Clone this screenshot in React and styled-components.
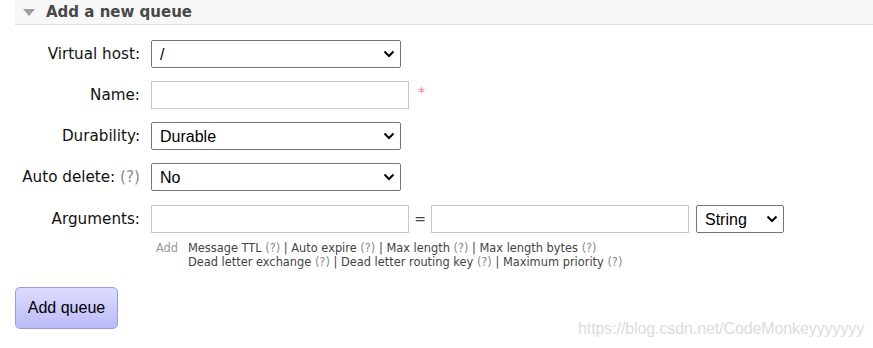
import React from 'react'
import styled, { createGlobalStyle } from 'styled-components'

const GlobalStyle = createGlobalStyle`
  html, body {
    margin: 0;
    padding: 0;
    background: #fff;
  }
  body {
    font-family: "DejaVu Sans", Verdana, sans-serif;
    color: #000;
  }
`

// 필드 설명 도움말 목록
const helpLines = [
  ['Message TTL', 'Auto expire', 'Max length', 'Max length bytes'],
  ['Dead letter exchange', 'Dead letter routing key', 'Maximum priority'],
]

function Chevron() {
  return (
    <ArrowIcon width="12" height="8" viewBox="0 0 12 8">
      <path d="M1.5 1.5 L6 6 L10.5 1.5" fill="none" stroke="#000" strokeWidth="2" />
    </ArrowIcon>
  )
}

function Select({ value, width, gap }) {
  return (
    <SelectWrap $width={width} $gap={gap}>
      <SelectBox $width={width} defaultValue={value}>
        <option>{value}</option>
      </SelectBox>
      <Chevron />
    </SelectWrap>
  )
}

export default function App() {
  return (
    <Page>
      <GlobalStyle />
      <SectionHead>
        <Triangle />
        <Title>Add a new queue</Title>
      </SectionHead>

      <Form>
        <Row>
          <Label>Virtual host:</Label>
          <Select value="/" width={250} />
        </Row>
        <Row>
          <Label>Name:</Label>
          <TextInput />
          <Required>*</Required>
        </Row>
        <Row>
          <Label>Durability:</Label>
          <Select value="Durable" width={250} />
        </Row>
        <Row>
          <Label>Auto delete: <Help>(?)</Help></Label>
          <Select value="No" width={250} />
        </Row>
        <Row $top={1}>
          <Label>Arguments:</Label>
          <TextInput />
          <Equals>=</Equals>
          <TextInput />
          <Select value="String" width={88} gap={7} />
        </Row>
        <HelpRow>
          <AddText>Add</AddText>
          <HelpList>
            {helpLines.map((line, i) => (
              <div key={i}>
                {line.map((name, j) => (
                  <span key={name}>
                    {j > 0 && ' | '}
                    {name} <Help>(?)</Help>
                  </span>
                ))}
              </div>
            ))}
          </HelpList>
        </HelpRow>
      </Form>

      <SubmitButton>Add queue</SubmitButton>
      <Watermark>https://blog.csdn.net/CodeMonkeyyyyyyy</Watermark>
    </Page>
  )
}

const Page = styled.div`
  position: relative;
  width: 873px;
  height: 348px;
  overflow: hidden;
`

const SectionHead = styled.div`
  margin-left: 15px;
  height: 24px;
  background: #f7f7f7;
  border-bottom: 1px solid #ddd;
  display: flex;
  align-items: center;
`

const Triangle = styled.span`
  width: 0;
  height: 0;
  margin-left: 8px;
  margin-right: 11px;
  border-left: 6px solid transparent;
  border-right: 6px solid transparent;
  border-top: 7px solid #a0a0a0;
`

const Title = styled.h2`
  margin: 0;
  font-size: 15px;
  font-weight: bold;
  color: #484848;
`

const Form = styled.div`
  display: flex;
  flex-direction: column;
  gap: 13px;
  padding-top: 15px;
`

const Row = styled.div`
  display: flex;
  align-items: center;
  height: 28px;
  margin-top: ${p => p.$top || 0}px;
`

const Label = styled.label`
  width: 140px;
  padding-right: 11px;
  box-sizing: content-box;
  text-align: right;
  font-size: 15.2px;
  color: #111;
  white-space: nowrap;
`

const Help = styled.span`
  color: #8a8a8a;
`

const SelectWrap = styled.div`
  position: relative;
  width: ${p => p.$width}px;
  height: 28px;
  margin-left: ${p => p.$gap || 0}px;
`

const SelectBox = styled.select`
  appearance: none;
  width: ${p => p.$width}px;
  height: 28px;
  box-sizing: border-box;
  border: 1px solid #767676;
  border-radius: 2px;
  background: #fff;
  padding: 0 0 0 8px;
  font-family: "Liberation Sans", Arial, sans-serif;
  font-size: 16px;
  color: #000;
  outline: none;
`

const ArrowIcon = styled.svg`
  position: absolute;
  right: 6px;
  top: 10px;
  pointer-events: none;
`

const TextInput = styled.input`
  width: 258px;
  height: 28px;
  box-sizing: border-box;
  border: 1px solid #c8c8c8;
  border-radius: 0;
  padding: 0 4px;
  font-size: 14px;
  outline: none;
`

const Required = styled.span`
  color: #f08080;
  font-size: 14px;
  margin-left: 9px;
  align-self: flex-start;
  margin-top: 3px;
`

const Equals = styled.span`
  width: 22px;
  text-align: center;
  font-size: 14px;
  color: #444;
`

const HelpRow = styled.div`
  display: flex;
  margin-top: -5px;
  padding-left: 156px;
  font-size: 11.4px;
  line-height: 14px;
  color: #444;
`

const AddText = styled.span`
  color: #999;
  width: 32px;
`

const HelpList = styled.div`
  display: flex;
  flex-direction: column;
`

const SubmitButton = styled.button`
  display: block;
  margin: 18px 0 0 15px;
  width: 103px;
  height: 42px;
  border: 1px solid #9a9ae8;
  border-radius: 5px;
  background: linear-gradient(#dcdcff, #bbbbf8);
  font-family: "Liberation Sans", Arial, sans-serif;
  font-size: 16px;
  color: #000;
`

const Watermark = styled.span`
  position: absolute;
  left: 578px;
  top: 320px;
  font-family: "Liberation Sans", Arial, sans-serif;
  font-size: 16px;
  color: #dcdcdc;
  letter-spacing: -0.1px;
`
